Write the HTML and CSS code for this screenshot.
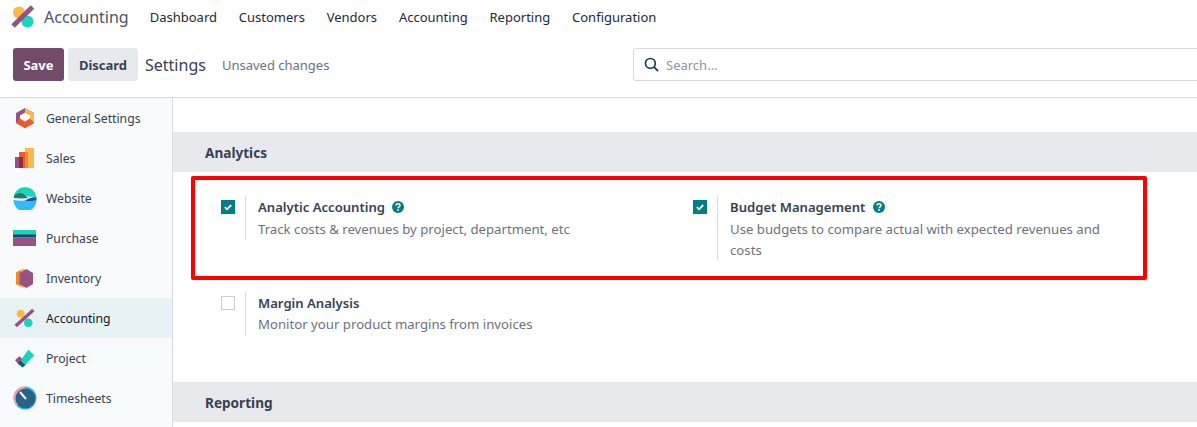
FILE: index.html
```html
<!DOCTYPE html>
<html lang="en">
  <head>
    <meta charset="UTF-8" />
    <title>Settings</title>
    <link rel="stylesheet" href="styles.css">
  </head>
  <body>
    <nav class="navbar">
      <svg class="brand-icon" viewBox="0 0 24 24" width="24" height="24">
        <circle cx="8" cy="7.5" r="6" fill="#fbb945" />
        <circle cx="16.5" cy="16.5" r="6" fill="#1ad3bb" />
        <path d="M2 21 21.5 2" stroke="#985184" stroke-width="5" />
      </svg>
      <span class="brand">Accounting</span>
      <a class="nav-link">Dashboard</a>
      <a class="nav-link">Customers</a>
      <a class="nav-link">Vendors</a>
      <a class="nav-link">Accounting</a>
      <a class="nav-link">Reporting</a>
      <a class="nav-link">Configuration</a>
    </nav>

    <div class="control-panel">
      <button class="btn btn-save">Save</button>
      <button class="btn btn-discard">Discard</button>
      <span class="page-title">Settings</span>
      <span class="unsaved">Unsaved changes</span>
      <div class="search">
        <svg viewBox="0 0 16 16" width="15" height="15">
          <circle cx="6.8" cy="6.8" r="5.2" fill="none" stroke="#1f3a56" stroke-width="1.8" />
          <path d="M10.6 10.6 15 15" stroke="#1f3a56" stroke-width="2" />
        </svg>
        <span>Search...</span>
      </div>
    </div>

    <div class="main">
      <aside class="sidebar">
        <div class="app">
          <svg viewBox="0 0 24 24" width="24" height="24">
            <path d="M12 2 21 7V17L12 22 3 17V7Z" fill="#985184" />
            <path d="M12 2 21 7V17L17 15V9.5L12 6.5Z" fill="#fbb945" />
            <path d="M12 6.5 17 9.5V14.5L12 17.5 7 14.5V9.5Z" fill="#f9fafb" />
            <path d="M7 12.5 12 15.5 17 12.5 21 17 12 22 3 17Z" fill="#f0592c" />
            <path d="M9 11 12 9 15 11V13L12 15 9 13Z" fill="#f9fafb" />
          </svg>
          General Settings
        </div>
        <div class="app">
          <svg viewBox="0 0 24 24" width="24" height="24">
            <rect x="12" y="2" width="9" height="20" fill="#fbb945" />
            <rect x="6" y="6" width="6" height="16" fill="#f0592c" />
            <rect x="12" y="6" width="3" height="16" fill="#f8863a" />
            <rect x="2" y="11" width="8" height="11" fill="#985184" />
            <rect x="6" y="11" width="4" height="11" fill="#8d2c40" />
          </svg>
          Sales
        </div>
        <div class="app">
          <svg viewBox="0 0 24 24" width="24" height="24">
            <path d="M2 7A11.5 11.5 0 0 1 23 9.5C23.3 10.5 23.5 11 23.5 11.5 18 10 14 12 9 8 6 6.8 3.5 7 1 9Z" fill="#1ad3bb" />
            <path d="M1 9.5C4 6.5 8 6.5 11 8.5 13 10.5 14.5 11.5 15.5 12 10 13 5 12 .8 12Z" fill="#1f7d70" />
            <path d="M.5 14C6 15 11 15 14 14H23.5A11.5 11.5 0 0 1 .5 14Z" fill="#2ebcfa" />
            <path d="M12 14.5C16 12 20 10.5 23.5 11.5V14C20 15 16 15.5 12 14.5Z" fill="#1d4f9c" />
          </svg>
          Website
        </div>
        <div class="app">
          <svg viewBox="0 0 24 24" width="24" height="24">
            <rect x="0" y="4" width="23" height="4.3" fill="#1ad3bb" />
            <rect x="0" y="8.3" width="23" height="3.3" fill="#00556b" />
            <rect x="0" y="11.6" width="23" height="8.4" fill="#985184" />
          </svg>
          Purchase
        </div>
        <div class="app">
          <svg viewBox="0 0 24 24" width="24" height="24">
            <path d="M10 2.5 17 6V18L10 22 3 18V6.5Z" fill="#fbb945" />
            <path d="M3 6.5 8 4V20.5L3 18Z" fill="#f0892c" />
            <path d="M13.5 3 20 7V18L13.5 22 6.5 18V7Z" fill="#985184" />
          </svg>
          Inventory
        </div>
        <div class="app active">
          <svg viewBox="0 0 24 24" width="24" height="24">
            <circle cx="7.7" cy="7.7" r="4" fill="#fbb945" />
            <circle cx="15.3" cy="16.7" r="4.3" fill="#1ad3bb" />
            <path d="M2.7 20 20.3 4" stroke="#985184" stroke-width="3.5" />
          </svg>
          Accounting
        </div>
        <div class="app">
          <svg viewBox="0 0 24 24" width="24" height="24">
            <path d="M2 14.3 6.3 10.3 11 14.3 6.3 19.3Z" fill="#985184" />
            <path d="M15.3 3.7 21.3 9.3 12 19.3 7.7 14.3Z" fill="#1ad3bb" />
            <path d="M7.5 14.5 12.5 19 9.5 21.5 5 17.5Z" fill="#0f5b72" />
          </svg>
          Project
        </div>
        <div class="app">
          <svg viewBox="0 0 24 24" width="24" height="24">
            <circle cx="12" cy="12" r="11.5" fill="#2ebcfa" />
            <path d="M12 .5A11.5 11.5 0 0 0 .5 12 11.5 11.5 0 0 0 4 20L12 12Z" fill="#f59ea0" />
            <circle cx="12.5" cy="12.5" r="10" fill="#2a6285" />
            <path d="M7 6 13 13" stroke="#f4f4f4" stroke-width="2" />
          </svg>
          Timesheets
        </div>
      </aside>

      <section class="content">
        <h2 class="section-title first">Analytics</h2>
        <div class="settings">
          <div class="setting has-help">
            <span class="check checked"><svg viewBox="0 0 14 14" width="14" height="14"><path d="M3.8 7.2 6 9.3 10.2 5" fill="none" stroke="#fff" stroke-width="1.8" /></svg></span>
            <div class="setting-text">
              <div class="setting-name">Analytic Accounting <svg class="help" viewBox="0 0 12 12" width="12" height="12"><circle cx="6" cy="6" r="6" fill="#017e84" /><path d="M4 4.6C4 2.2 8 2.2 8 4.5 8 6 6 5.8 6 7.3" fill="none" stroke="#fff" stroke-width="1.5" /><rect x="5.2" y="8.2" width="1.6" height="1.6" fill="#fff" /></svg></div>
              <div class="setting-desc">Track costs &amp; revenues by project, department, etc</div>
            </div>
          </div>
          <div class="setting has-help">
            <span class="check checked"><svg viewBox="0 0 14 14" width="14" height="14"><path d="M3.8 7.2 6 9.3 10.2 5" fill="none" stroke="#fff" stroke-width="1.8" /></svg></span>
            <div class="setting-text">
              <div class="setting-name">Budget Management <svg class="help" viewBox="0 0 12 12" width="12" height="12"><circle cx="6" cy="6" r="6" fill="#017e84" /><path d="M4 4.6C4 2.2 8 2.2 8 4.5 8 6 6 5.8 6 7.3" fill="none" stroke="#fff" stroke-width="1.5" /><rect x="5.2" y="8.2" width="1.6" height="1.6" fill="#fff" /></svg></div>
              <div class="setting-desc">Use budgets to compare actual with expected revenues and costs</div>
            </div>
          </div>
          <div class="setting">
            <span class="check"></span>
            <div class="setting-text">
              <div class="setting-name">Margin Analysis</div>
              <div class="setting-desc">Monitor your product margins from invoices</div>
            </div>
          </div>
        </div>
        <h2 class="section-title">Reporting</h2>
      </section>
    </div>

    <div class="highlight"></div>
  </body>
</html>
```

FILE: styles.css
```css
html,
body {
  margin: 0;
  height: 427px;
  overflow: hidden;
}
body {
  font-family: "Noto Sans", sans-serif;
  font-size: 13px;
  color: #374151;
  background: #fff;
  position: relative;
}
.navbar {
  display: flex;
  align-items: center;
  height: 34px;
  padding-left: 11px;
}
.brand-icon {
  margin-right: 9px;
}
.brand {
  font-size: 16px;
  color: #4b5563;
  margin-right: 21px;
}
.nav-link {
  color: #1f2937;
  margin-right: 21.8px;
}
.control-panel {
  display: flex;
  align-items: center;
  height: 61px;
  padding-left: 13px;
  padding-bottom: 2px;
  border-bottom: 1px solid #d8dadd;
}
.btn {
  height: 33px;
  border: none;
  border-radius: 3px;
  font-family: inherit;
  font-size: 13px;
  font-weight: 700;
  padding: 0;
}
.btn-save {
  width: 51px;
  background: #714b67;
  color: #fff;
  margin-right: 4px;
}
.btn-discard {
  width: 70px;
  background: #e7e9ed;
  color: #374151;
  margin-right: 7px;
}
.page-title {
  font-size: 16px;
  color: #374151;
  margin-right: 16px;
}
.unsaved {
  color: #6b7280;
}
.search {
  display: flex;
  align-items: center;
  gap: 7px;
  box-sizing: border-box;
  width: 580px;
  height: 33px;
  margin-left: auto;
  margin-right: -16px;
  padding-left: 10px;
  border: 1px solid #d8dadd;
  border-radius: 3px;
  color: #8b95a3;
}
.main {
  display: flex;
  height: 329px;
}
.sidebar {
  flex: 0 0 172px;
  background: #f9fafb;
  border-right: 1px solid #d8dadd;
}
.app {
  display: flex;
  align-items: center;
  gap: 9px;
  height: 40px;
  padding-left: 13px;
  font-size: 12.2px;
  color: #374151;
}
.app.active {
  background: #e6f2f3;
  color: #111827;
}
.content {
  flex: 1;
}
.section-title {
  margin: 0;
  height: 40px;
  padding-left: 32px;
  line-height: 41px;
  font-size: 13.6px;
  font-weight: 700;
  color: #374151;
  background: #e7e9ed;
}
.section-title.first {
  margin-top: 34px;
}
.settings {
  display: grid;
  grid-template-columns: 472px 472px;
  row-gap: 32px;
  padding: 24px 0 47px 48px;
}
.setting {
  display: flex;
  align-items: flex-start;
}
.check {
  box-sizing: border-box;
  width: 14px;
  height: 14px;
  margin-top: 4px;
  margin-right: 10px;
  border: 1px solid #c9ccd2;
}
.check.checked {
  border: none;
  background: #017e84;
}
.check svg {
  display: block;
}
.setting-text {
  flex: 1;
  padding-left: 12px;
  padding-right: 50px;
  border-left: 1px solid #d8dadd;
  font-size: 13.2px;
  line-height: 21px;
}
.setting-name {
  font-size: 13.1px;
  font-weight: 600;
  line-height: 22px;
  color: #374151;
}
.help {
  margin-left: 4px;
  vertical-align: -1px;
}
.setting-desc {
  color: #6b7280;
}
.has-help .setting-desc {
  margin: 1px 0 -1px;
}
.highlight {
  position: absolute;
  left: 191px;
  top: 176px;
  width: 948px;
  height: 96px;
  border: 4px solid #f00;
  border-radius: 2px;
}
```
